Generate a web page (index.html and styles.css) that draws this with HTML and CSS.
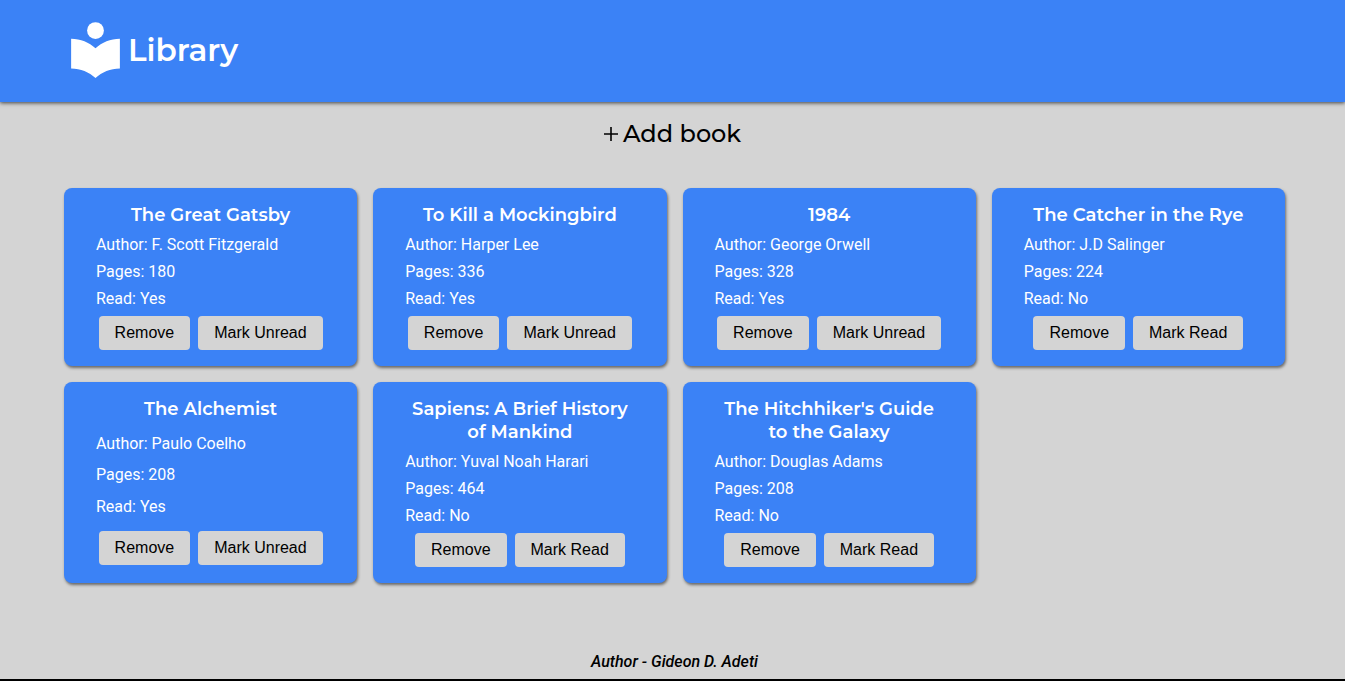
FILE: index.html
```html
<!DOCTYPE html>
<html lang="en">
<head>
<meta charset="utf-8">
<meta name="viewport" content="width=device-width, initial-scale=1">
<title>Library</title>
<link rel="stylesheet" href="styles.css">
</head>
<body>
<header class="header">
  <svg class="logo" viewBox="0 0 24 24" fill="currentColor" aria-hidden="true"><path d="M12 11.55C9.64 9.35 6.48 8 3 8v11c3.48 0 6.64 1.35 9 3.55 2.36-2.19 5.52-3.55 9-3.55V8c-3.48 0-6.64 1.35-9 3.55z"/><circle cx="12" cy="5" r="3.1"/></svg>
  <h1 class="brand">Library</h1>
</header>
<main class="main">
  <button class="add" type="button"><svg class="plus" viewBox="0 0 14 14" aria-hidden="true"><path d="M7 0v14M0 7h14" stroke="currentColor" stroke-width="1.6"/></svg>Add book</button>
  <section class="books">
    <article class="card"><h2 class="title">The Great Gatsby</h2><p>Author: F. Scott Fitzgerald</p><p>Pages: 180</p><p>Read: Yes</p><div class="actions"><button type="button">Remove</button><button type="button">Mark Unread</button></div></article>
    <article class="card"><h2 class="title">To Kill a Mockingbird</h2><p>Author: Harper Lee</p><p>Pages: 336</p><p>Read: Yes</p><div class="actions"><button type="button">Remove</button><button type="button">Mark Unread</button></div></article>
    <article class="card"><h2 class="title">1984</h2><p>Author: George Orwell</p><p>Pages: 328</p><p>Read: Yes</p><div class="actions"><button type="button">Remove</button><button type="button">Mark Unread</button></div></article>
    <article class="card"><h2 class="title">The Catcher in the Rye</h2><p>Author: J.D Salinger</p><p>Pages: 224</p><p>Read: No</p><div class="actions"><button type="button">Remove</button><button type="button">Mark Read</button></div></article>
    <article class="card"><h2 class="title">The Alchemist</h2><p>Author: Paulo Coelho</p><p>Pages: 208</p><p>Read: Yes</p><div class="actions"><button type="button">Remove</button><button type="button">Mark Unread</button></div></article>
    <article class="card"><h2 class="title">Sapiens: A Brief History of Mankind</h2><p>Author: Yuval Noah Harari</p><p>Pages: 464</p><p>Read: No</p><div class="actions"><button type="button">Remove</button><button type="button">Mark Read</button></div></article>
    <article class="card"><h2 class="title">The Hitchhiker's Guide to the Galaxy</h2><p>Author: Douglas Adams</p><p>Pages: 208</p><p>Read: No</p><div class="actions"><button type="button">Remove</button><button type="button">Mark Read</button></div></article>
  </section>
</main>
<footer class="footer">Author - Gideon D. Adeti</footer>
</body>
</html>
```

FILE: styles.css
```css
* {
  box-sizing: border-box;
  margin: 0;
}

body {
  display: flex;
  flex-direction: column;
  min-height: 100vh;
  background: #d4d4d4;
  color: #000;
  font: 16px/19px Roboto, "Liberation Sans", sans-serif;
}

.header {
  display: flex;
  align-items: center;
  padding: 17px 63px 20px;
  background: #3b82f6;
  color: #fff;
  box-shadow: 0 1px 4px rgba(0, 0, 0, 0.7);
}

.logo {
  width: 65px;
  height: 65px;
}

.brand {
  font: 600 31px/40px Montserrat, Inter, sans-serif;
}

.main {
  flex: 1;
  display: flex;
  flex-direction: column;
  gap: 38px;
  padding: 16px 0;
}

.add {
  display: flex;
  align-items: center;
  align-self: center;
  gap: 5px;
  padding: 0;
  border: 0;
  background: none;
  color: inherit;
  font: 500 24px/32px Montserrat, Inter, sans-serif;
  cursor: pointer;
}

.plus {
  width: 14px;
  height: 14px;
}

.books {
  display: grid;
  grid-template-columns: repeat(auto-fill, minmax(272px, 1fr));
  gap: 16px;
  padding: 0 60px 0 64px;
}

.card {
  display: grid;
  gap: 8px;
  padding: 16px 32px;
  border-radius: 8px;
  background: #3b82f6;
  color: #fff;
  box-shadow: 1px 2px 3px rgba(0, 0, 0, 0.5);
}

.title {
  font: 600 18px/23px Montserrat, Inter, sans-serif;
  text-align: center;
}

.actions {
  display: flex;
  align-items: center;
  justify-content: center;
  gap: 8px;
}

.actions button {
  padding: 8px 16px;
  border: 0;
  border-radius: 4px;
  background: #d4d4d4;
  color: #000;
  font: 16px/18px "Liberation Sans", Arial, sans-serif;
  white-space: nowrap;
  cursor: pointer;
}

.footer {
  padding: 8px 60px 8px 64px;
  border-bottom: 2px solid #000;
  font-style: italic;
  font-weight: 500;
  text-align: center;
}
```
